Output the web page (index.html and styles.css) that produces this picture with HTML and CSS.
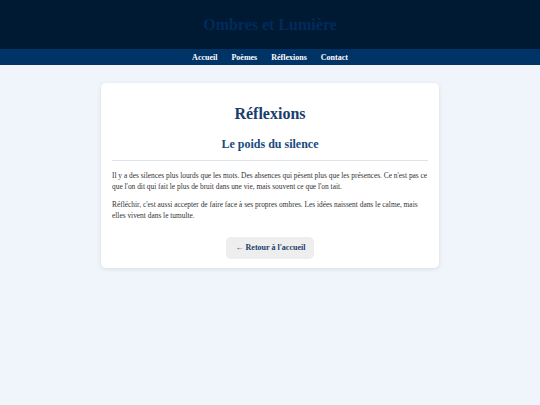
FILE: index.html
```html
<!DOCTYPE html>
<html lang="fr">
<head>
<meta charset="utf-8">
<title>Réflexions</title>
<link rel="stylesheet" href="styles.css">
</head>
<body>
<header class="site-header">
  <h1 class="site-title">Ombres et Lumière</h1>
</header>
<nav class="site-nav">
  <a href="#">Accueil</a>
  <a href="#">Poèmes</a>
  <a href="#">Réflexions</a>
  <a href="#">Contact</a>
</nav>
<main class="page">
  <article class="card">
    <h2 class="card-title">Réflexions</h2>
    <h3 class="card-subtitle">Le poids du silence</h3>
    <hr class="divider">
    <p class="text">Il y a des silences plus lourds que les mots. Des absences qui pèsent plus que les présences. Ce n'est pas ce que l'on dit qui fait le plus de bruit dans une vie, mais souvent ce que l'on tait.</p>
    <p class="text">Réfléchir, c'est aussi accepter de faire face à ses propres ombres. Les idées naissent dans le calme, mais elles vivent dans le tumulte.</p>
    <div class="actions">
      <a class="back" href="#">← Retour à l'accueil</a>
    </div>
  </article>
</main>
</body>
</html>
```
FILE: styles.css
```css
* { box-sizing: border-box; }
html, body { margin: 0; padding: 0; }
body {
  background: #f0f5fc;
  font-family: Georgia, "Liberation Serif", serif;
  color: #333;
}
.site-header {
  background: #001a33;
  height: 49px;
  display: flex;
  align-items: center;
  justify-content: center;
}
.site-title {
  margin: 0;
  font-size: 16px;
  font-weight: bold;
  color: #002b5c;
}
.site-nav {
  background: #003366;
  height: 16px;
  display: flex;
  justify-content: center;
  align-items: center;
  gap: 14px;
}
.site-nav a {
  color: #fff;
  text-decoration: none;
  font-size: 8px;
  font-weight: bold;
}
.page {
  padding: 18px 101px;
}
.card {
  background: #fff;
  border-radius: 5px;
  box-shadow: 0 1px 4px rgba(0, 0, 0, 0.1);
  padding: 21px 11px 9px;
}
.card-title {
  margin: 0;
  text-align: center;
  color: #1a3d6b;
  font-size: 16px;
  line-height: 20px;
}
.card-subtitle {
  margin: 13px 0 0;
  text-align: center;
  color: #1a4a80;
  font-size: 12px;
  line-height: 14px;
}
.divider {
  border: 0;
  border-top: 1px solid #dde3ea;
  margin: 9px 0 9px;
}
.text {
  font-size: 7.4px;
  line-height: 11px;
  margin: 0 0 7px;
  color: #333;
}
.actions {
  display: flex;
  justify-content: center;
  margin-top: 16px;
}
.back {
  background: #eeeeee;
  border-radius: 5px;
  padding: 7px 9px 7px 10px;
  color: #1a3d6b;
  font-weight: bold;
  font-size: 8px;
  line-height: 8px;
  text-decoration: none;
}
```
